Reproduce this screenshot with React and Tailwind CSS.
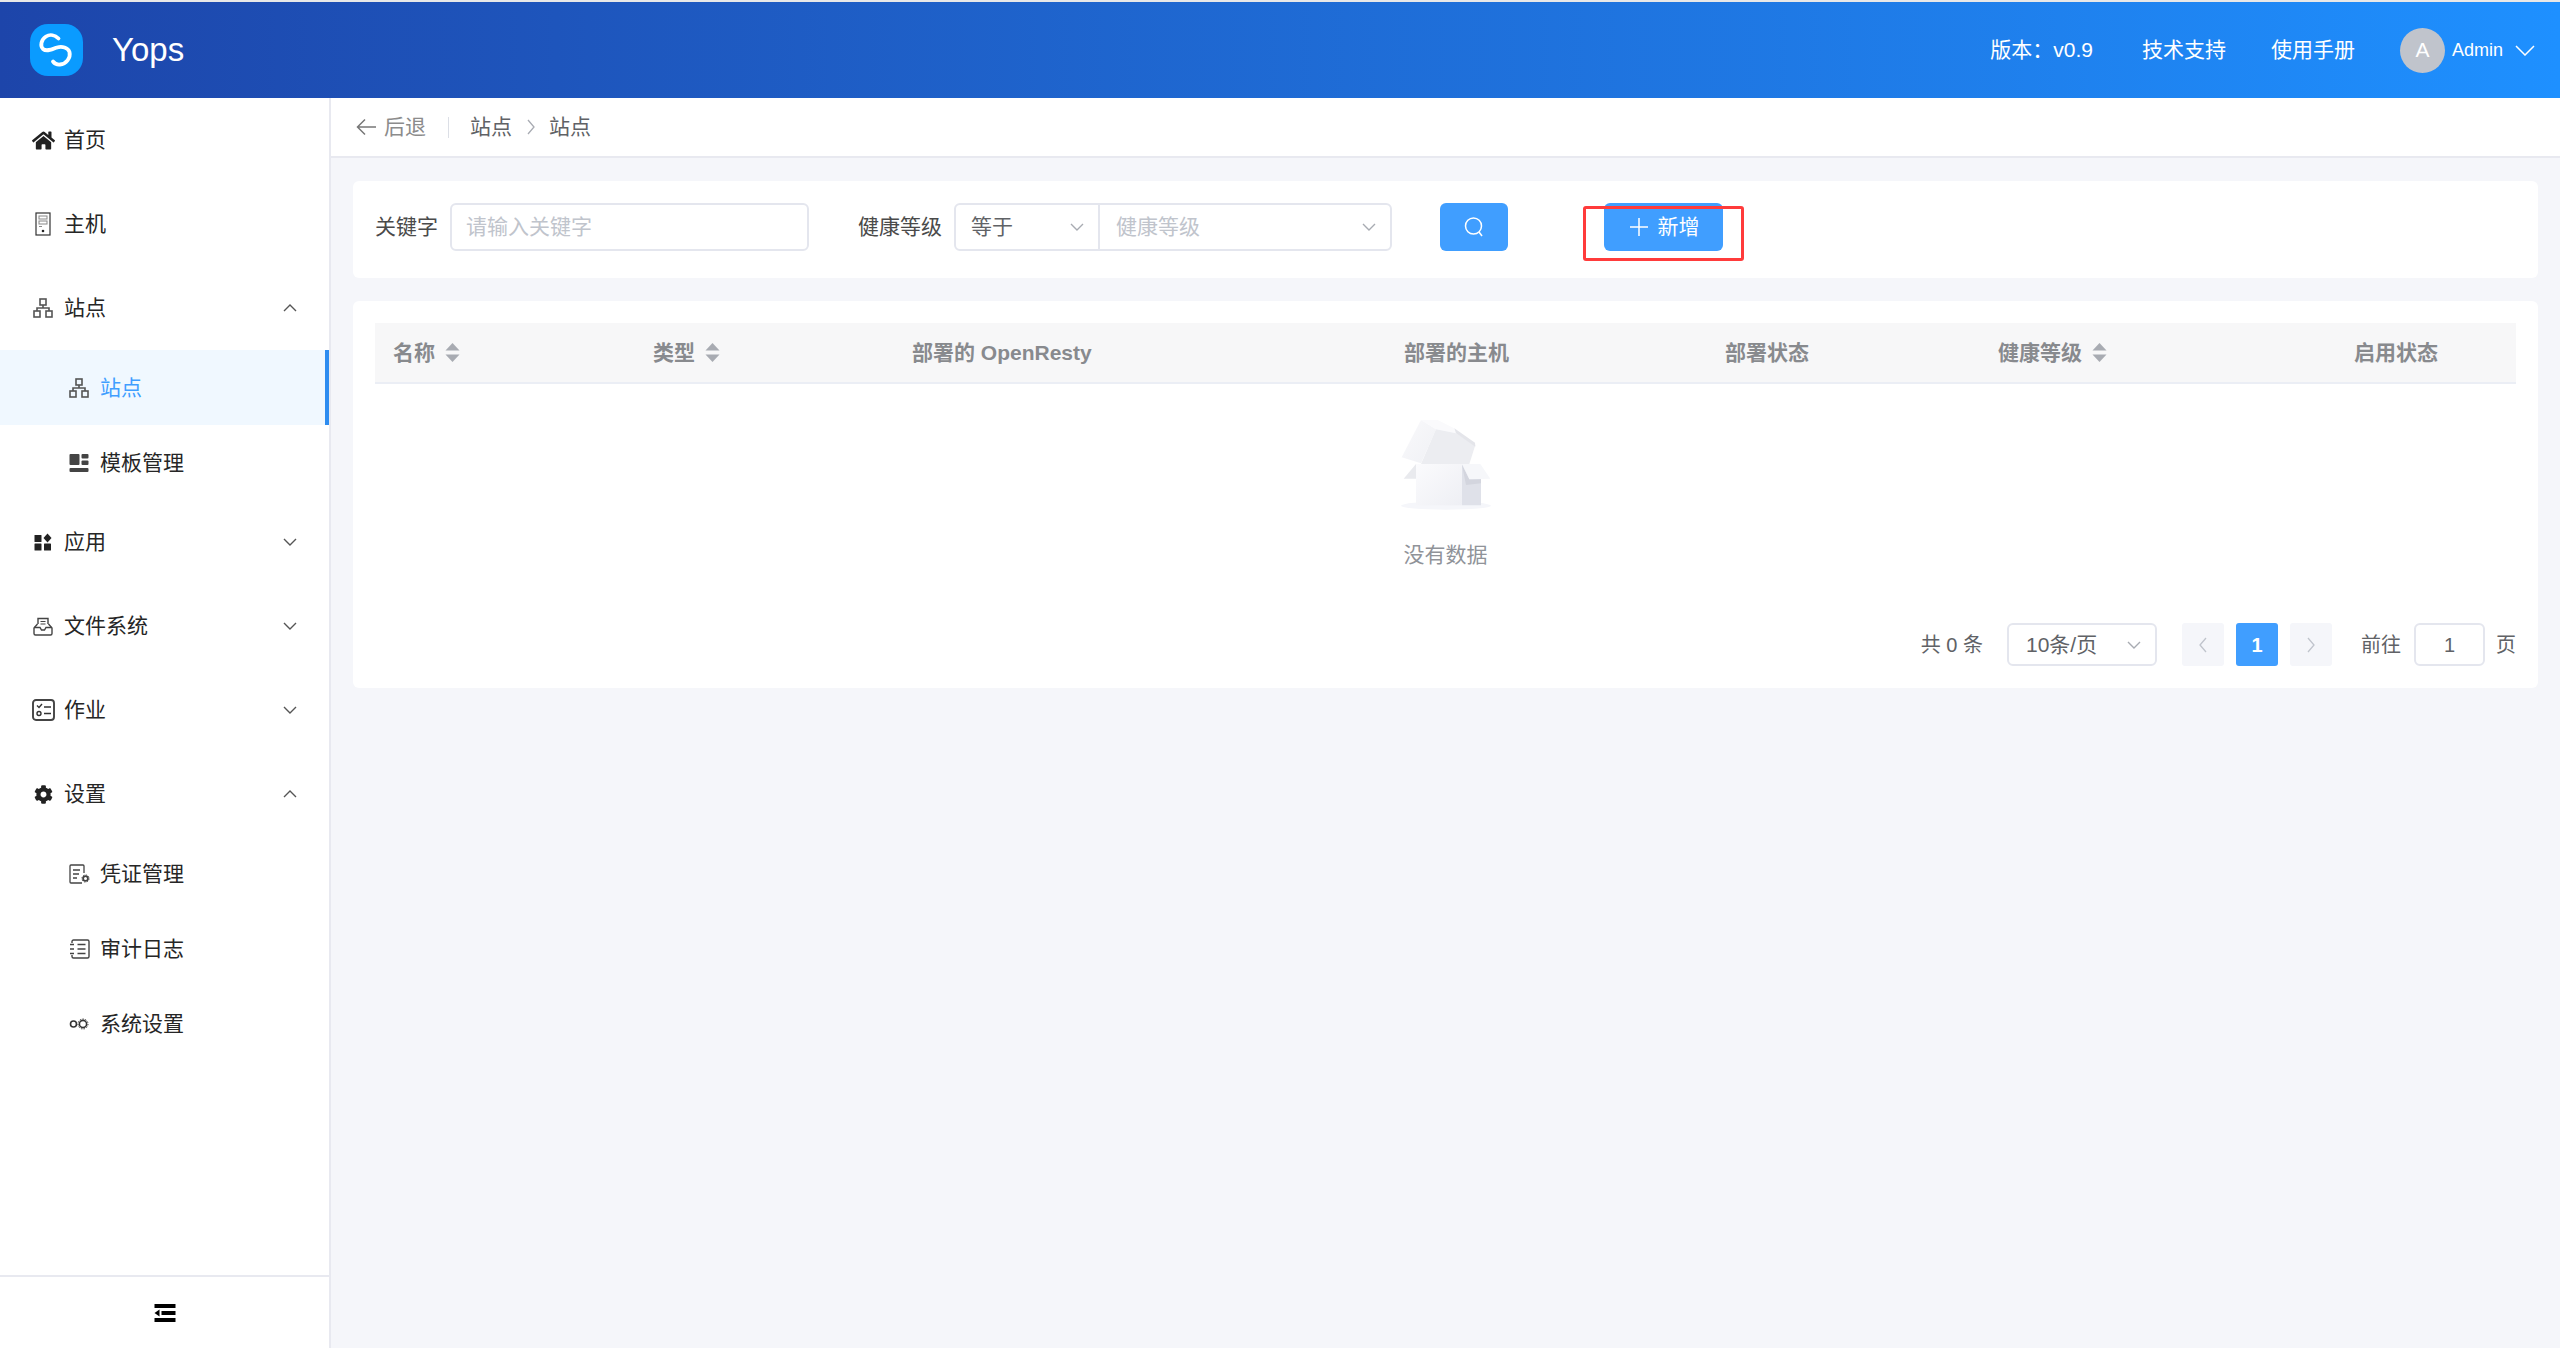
import { FaHome, FaCog } from "react-icons/fa";

const font = "font-['Liberation_Sans','Noto_Sans_CJK_SC',sans-serif]";

function Chevron({ dir = "down", w = 14, color = "#555", sw = 1.4 }) {
  const h = w / 2 + 1;
  const pts = {
    down: `1,1 ${w / 2},${h - 1} ${w - 1},1`,
    up: `1,${h - 1} ${w / 2},1 ${w - 1},${h - 1}`,
  };
  return (
    <svg width={w} height={h} viewBox={`0 0 ${w} ${h}`} fill="none">
      <polyline points={pts[dir]} stroke={color} strokeWidth={sw} />
    </svg>
  );
}

function ChevronSide({ dir = "right", color = "#a8abb2" }) {
  return (
    <svg width="8" height="16" viewBox="0 0 8 16" fill="none">
      <polyline points={dir === "right" ? "1,1 7,8 1,15" : "7,1 1,8 7,15"} stroke={color} strokeWidth="1.3" />
    </svg>
  );
}

function SiteIcon() {
  return (
    <svg width="20" height="20" viewBox="0 0 20 20" fill="none" stroke="#555" strokeWidth="1.6">
      <rect x="7" y="1" width="6" height="6" />
      <rect x="1" y="13" width="6" height="6" />
      <rect x="13" y="13" width="6" height="6" />
      <path d="M10 7v3M4 13v-3h12v3" />
    </svg>
  );
}

function HostIcon() {
  return (
    <svg width="16" height="24" viewBox="0 0 16 24" fill="none">
      <rect x="1" y="1" width="14" height="22" stroke="#333" strokeWidth="1.2" />
      <rect x="4" y="4" width="8" height="3" stroke="#888" />
      <rect x="4" y="9" width="8" height="3" stroke="#888" />
      <path d="M4 14.5h3" stroke="#888" />
      <circle cx="8" cy="19" r="1.3" fill="#222" />
    </svg>
  );
}

function TemplateIcon() {
  return (
    <svg width="20" height="20" viewBox="0 0 20 20" fill="#444">
      <rect x="0.5" y="1" width="10" height="11" rx="1" />
      <rect x="12.5" y="1" width="7" height="4.5" rx="1" />
      <rect x="12.5" y="7.5" width="7" height="4.5" rx="1" />
      <rect x="0.5" y="15" width="19" height="4" rx="1" />
    </svg>
  );
}

function AppsIcon() {
  return (
    <svg width="18" height="18" viewBox="0 0 18 18" fill="#222">
      <rect x="0.5" y="2" width="7" height="7" rx="0.6" />
      <rect x="0.5" y="10.5" width="7" height="7" rx="0.6" />
      <rect x="10" y="10.5" width="7" height="7" rx="0.6" />
      <path d="M13.5 0.5l4 4.5-4 4.5-4-4.5z" />
    </svg>
  );
}

function FilesIcon() {
  return (
    <svg width="20" height="19" viewBox="0 0 20 19" fill="none" stroke="#444" strokeWidth="1.4">
      <path d="M5 7V1.5h10V7" />
      <path d="M7.5 4.5h5M7.5 7h5" strokeWidth="1.1" />
      <path d="M4.5 7L1 11v5.500a1.500 1.500 0 0 0 1.500 1.500h15a1.500 1.500 0 0 0 1.500-1.500V11l-3.500-4" />
      <path d="M1 10.500l6 0 1.500 2.500h3l1.500-2.500 6 0" />
    </svg>
  );
}

function JobIcon() {
  return (
    <svg width="23" height="22" viewBox="0 0 23 22" fill="none" stroke="#333" strokeWidth="1.4">
      <rect x="1" y="1" width="21" height="20" rx="3" strokeWidth="1.9" stroke="#444" />
      <path d="M5 6.500l2 2 3-3.500" />
      <circle cx="7" cy="14.500" r="2" />
      <path d="M12 8h7M12 14.500h7" />
    </svg>
  );
}

function CertIcon() {
  return (
    <svg width="21" height="20" viewBox="0 0 21 20" fill="none" stroke="#444" strokeWidth="1.3">
      <path d="M13 19H2a1 1 0 0 1-1-1V2a1 1 0 0 1 1-1h12a1 1 0 0 1 1 1v7" />
      <path d="M4 6h7M4 10h6M4 14h4" />
      <circle cx="16.500" cy="14.500" r="2.400" strokeWidth="1.800" />
      <circle cx="16.500" cy="14.500" r="3.600" strokeWidth="0.900" strokeDasharray="1.400 1.400" />
    </svg>
  );
}

function AuditIcon() {
  return (
    <svg width="21" height="20" viewBox="0 0 21 20" fill="none" stroke="#444" strokeWidth="1.4">
      <path d="M3 4V2.500A1.500 1.500 0 0 1 4.500 1h14A1.500 1.500 0 0 1 20 2.500v15a1.500 1.500 0 0 1-1.500 1.500h-14A1.500 1.500 0 0 1 3 17.500V16" />
      <path d="M1 5.500h4M1 10h4M1 14.500h4" />
      <path d="M8.500 5.500h8M8.500 10h8M8.500 14.500h8" />
    </svg>
  );
}

function SystemIcon() {
  return (
    <svg width="20" height="12" viewBox="0 0 20 12" fill="none" stroke="#333" strokeWidth="1.600">
      <circle cx="4.500" cy="6" r="3" />
      <circle cx="14" cy="6" r="3.600" />
      <circle cx="14" cy="6" r="5" strokeWidth="1" strokeDasharray="1.400 1.400" />
    </svg>
  );
}

function Logo() {
  return (
    <div className="flex h-[52px] w-[53px] items-center justify-center rounded-[18px] bg-[#0a9bff]">
      <svg width="53" height="52" viewBox="30 24 53 52" fill="none">
        <path
          d="M58.500 38.500C55 35 50 34 46 36.500C41 39.500 40 46 43 49C46.500 52 52 49.500 57 47.500C62 46 68 47.500 69.500 52C71 58 66 64 60 64.500C57 64.800 54.500 63.500 53 61.500"
          stroke="#fff"
          strokeWidth="3.800"
          strokeLinecap="round"
        />
      </svg>
    </div>
  );
}

function EmptyBox() {
  return (
    <svg width="90" height="90" viewBox="180 60 270 270">
      <defs>
        <linearGradient id="front" x1="0" y1="0" x2="1" y2="1">
          <stop offset="0" stopColor="#fbfbfd" />
          <stop offset="1" stopColor="#eeeff4" />
        </linearGradient>
        <linearGradient id="flap" x1="0" y1="0" x2="1" y2="1">
          <stop offset="0" stopColor="#f9f9fb" />
          <stop offset="1" stopColor="#f0f1f5" />
        </linearGradient>
      </defs>
      <ellipse cx="315" cy="317" rx="135" ry="12" fill="#f5f6fa" />
      <polygon points="240,60 182,172 240,190 285,88" fill="url(#flap)" />
      <polygon points="240,60 290,60 340,85 345,100 285,88" fill="#fafafc" />
      <polygon points="285,88 345,100 403,135 385,192 240,192" fill="#ecedf1" />
      <polygon points="340,85 402,128 403,140 345,100" fill="#e4e5ea" />
      <polygon points="225,192 225,236 188,236" fill="#e9eaee" />
      <rect x="225" y="192" width="138" height="124" fill="url(#front)" />
      <polygon points="363,192 420,238 420,316 363,316" fill="#dfe1e9" />
      <polygon points="363,195 385,238 420,238 420,250 375,255" fill="#d3d5de" />
      <polygon points="363,192 418,192 448,236 385,238" fill="#f6f7fa" />
    </svg>
  );
}

function SortIcon() {
  return (
    <svg width="15" height="19" viewBox="0 0 15 19" fill="#a8abb2">
      <polygon points="7.500,0 14.500,7.500 0.500,7.500" />
      <polygon points="0.500,11.500 14.500,11.500 7.500,19" />
    </svg>
  );
}

const menu = [
  { label: "首页", icon: <FaHome size={23} color="#222" /> },
  { label: "主机", icon: <HostIcon /> },
  {
    label: "站点",
    icon: <SiteIcon />,
    open: true,
    children: [
      { label: "站点", icon: <SiteIcon />, active: true },
      { label: "模板管理", icon: <TemplateIcon /> },
    ],
  },
  { label: "应用", icon: <AppsIcon />, arrow: true },
  { label: "文件系统", icon: <FilesIcon />, arrow: true },
  { label: "作业", icon: <JobIcon />, arrow: true },
  {
    label: "设置",
    icon: <FaCog size={19} color="#222" />,
    open: true,
    children: [
      { label: "凭证管理", icon: <CertIcon /> },
      { label: "审计日志", icon: <AuditIcon /> },
      { label: "系统设置", icon: <SystemIcon /> },
    ],
  },
];

const columns = [
  { label: "名称", sort: true },
  { label: "类型", sort: true },
  { label: "部署的 OpenResty" },
  { label: "部署的主机" },
  { label: "部署状态" },
  { label: "健康等级", sort: true },
  { label: "启用状态" },
];

function Sidebar() {
  return (
    <aside className="flex w-[331px] shrink-0 flex-col border-r-2 border-[#e8e9f0] bg-white">
      <nav className="flex-1">
        {menu.map((item) => (
          <div key={item.label}>
            <div className="flex h-[84px] items-center pl-[31px] pr-[32px] text-[21px] text-[#262626]">
              <span className="flex w-[24px] justify-center">{item.icon}</span>
              <span className="ml-[9px]">{item.label}</span>
              {(item.arrow || item.open) && (
                <span className="ml-auto flex">
                  <Chevron dir={item.open ? "up" : "down"} />
                </span>
              )}
            </div>
            {item.children &&
              item.children.map((c) => (
                <div
                  key={c.label}
                  className={
                    c.active
                      ? "flex h-[75px] items-center border-r-4 border-[#2d8cf0] bg-[#f0f8ff] pl-[67px] text-[21px] text-[#409eff]"
                      : "flex h-[75px] items-center pl-[67px] text-[21px] text-[#262626]"
                  }
                >
                  <span className="flex w-[24px] justify-center">{c.icon}</span>
                  <span className="ml-[9px]">{c.label}</span>
                </div>
              ))}
          </div>
        ))}
      </nav>
      <div className="flex h-[73px] items-center justify-center border-t-2 border-[#e8e9f0]">
        <svg width="22" height="18" viewBox="0 0 22 18" fill="#000">
          <rect x="0.500" y="0" width="21" height="4" />
          <rect x="7.500" y="7" width="14" height="4" />
          <rect x="0.500" y="14" width="21" height="4" />
          <polygon points="0.500,9 5.500,5.500 5.500,12.500" />
        </svg>
      </div>
    </aside>
  );
}

export default function App() {
  return (
    <div className={`flex h-screen w-screen flex-col overflow-hidden bg-[#e8e8e8] pt-[2px] ${font}`}>
      <header className="flex h-[96px] shrink-0 items-center bg-gradient-to-r from-[#1d45aa] to-[#1e90ff] pl-[30px] pr-[25px] text-white">
        <Logo />
        <span className="ml-[29px] text-[33px]">Yops</span>
        <div className="ml-auto flex items-center text-[21px]">
          <span>版本：v0.9</span>
          <span className="ml-[49px]">技术支持</span>
          <span className="ml-[45px]">使用手册</span>
          <span className="ml-[45px] flex h-[45px] w-[45px] items-center justify-center rounded-full bg-[#c0c4cc]">A</span>
          <span className="ml-[7px] text-[18px]">Admin</span>
          <span className="ml-[12px] flex">
            <Chevron w={20} color="#fff" sw={1.5} />
          </span>
        </div>
      </header>

      <div className="flex flex-1 overflow-hidden">
        <Sidebar />
        <main className="flex-1 bg-[#f5f6fa]">
          <div className="flex h-[60px] items-center border-b-2 border-[#e8e9f0] bg-white pl-[25px] text-[21px]">
            <svg width="21" height="18" viewBox="0 0 21 18" fill="none" stroke="#777" strokeWidth="1.500">
              <path d="M20 9H2M9 1.500L1.500 9L9 16.500" />
            </svg>
            <span className="ml-[7px] text-[#8c8c8c]">后退</span>
            <span className="ml-[22px] h-[21px] w-px bg-[#dcdfe6]" />
            <span className="ml-[21px] text-[#606266]">站点</span>
            <span className="ml-[15px] flex">
              <ChevronSide />
            </span>
            <span className="ml-[14px] text-[#606266]">站点</span>
          </div>

          <section className="mx-[22px] mt-[23px] flex h-[97px] items-start rounded-[6px] bg-white pl-[22px] pt-[22px] text-[21px]">
            <span className="flex h-[48px] items-center text-[#4a4a4a]">关键字</span>
            <div className="ml-[12px] flex h-[48px] w-[359px] items-center rounded-[6px] border-2 border-[#e4e6ee] pl-[14px] text-[#c0c4cc]">
              请输入关键字
            </div>
            <span className="ml-[49px] flex h-[48px] items-center text-[#4a4a4a]">健康等级</span>
            <div className="ml-[12px] flex h-[48px] w-[438px] rounded-[6px] border-2 border-[#e4e6ee]">
              <div className="flex w-[144px] items-center justify-between border-r-2 border-[#e4e6ee] pl-[15px] pr-[14px] text-[#606266]">
                等于
                <Chevron color="#a8abb2" />
              </div>
              <div className="flex flex-1 items-center justify-between pl-[16px] pr-[14px] text-[#c0c4cc]">
                健康等级
                <Chevron color="#a8abb2" />
              </div>
            </div>
            <button className="ml-[48px] flex h-[48px] w-[68px] items-center justify-center rounded-[6px] bg-[#409eff]">
              <svg width="20" height="20" viewBox="0 0 20 20" fill="none" stroke="#fff" strokeWidth="1.500">
                <circle cx="9.500" cy="9" r="8" />
                <path d="M15 15l3 4" />
              </svg>
            </button>
            <div className="relative ml-[96px]">
              <button className="flex h-[48px] w-[119px] items-center justify-center rounded-[6px] bg-[#409eff] pl-[2px] text-white">
                <svg width="18" height="18" viewBox="0 0 18 18" stroke="#fff" strokeWidth="1.500">
                  <path d="M9 0v18M0 9h18" />
                </svg>
                <span className="ml-[10px]">新增</span>
              </button>
              <div className="absolute left-[-21px] top-[3px] h-[55px] w-[161px] rounded-[3px] border-[3px] border-[#ff3b3b]" />
            </div>
          </section>

          <section className="mx-[22px] mt-[23px] rounded-[6px] bg-white px-[22px] pt-[22px]">
            <div className="grid h-[61px] grid-cols-[260px_259px_492px_321px_273px_356px_180px] border-b-2 border-[#ebeef5] bg-[#f7f7f8] text-[21px] font-bold text-[#888a8e]">
              {columns.map((c) => (
                <div key={c.label} className="flex items-center pl-[18px]">
                  {c.label}
                  {c.sort && (
                    <span className="ml-[10px] flex">
                      <SortIcon />
                    </span>
                  )}
                </div>
              ))}
            </div>
            <div className="flex flex-col items-center pt-[36px]">
              <EmptyBox />
              <span className="mt-[30px] text-[21px] leading-[30px] text-[#909399]">没有数据</span>
            </div>
            <div className="mt-[53px] flex h-[43px] items-center justify-end text-[20px] text-[#606266]">
              <span>共 0 条</span>
              <div className="ml-[24px] flex h-[43px] w-[150px] items-center justify-between rounded-[6px] border-2 border-[#e4e6ee] pl-[17px] pr-[14px] text-[21px]">
                10条/页
                <Chevron color="#a8abb2" />
              </div>
              <button className="ml-[25px] flex h-[43px] w-[42px] items-center justify-center rounded-[3px] bg-[#f5f6fa]">
                <ChevronSide dir="left" color="#c0c4cc" />
              </button>
              <button className="ml-[12px] flex h-[43px] w-[42px] items-center justify-center rounded-[3px] bg-[#409eff] font-bold text-white">
                1
              </button>
              <button className="ml-[12px] flex h-[43px] w-[42px] items-center justify-center rounded-[3px] bg-[#f5f6fa]">
                <ChevronSide color="#c0c4cc" />
              </button>
              <span className="ml-[29px]">前往</span>
              <div className="ml-[13px] flex h-[43px] w-[71px] items-center justify-center rounded-[6px] border-2 border-[#e4e6ee]">
                1
              </div>
              <span className="ml-[11px]">页</span>
            </div>
            <div className="h-[22px]" />
          </section>
        </main>
      </div>
    </div>
  );
}
